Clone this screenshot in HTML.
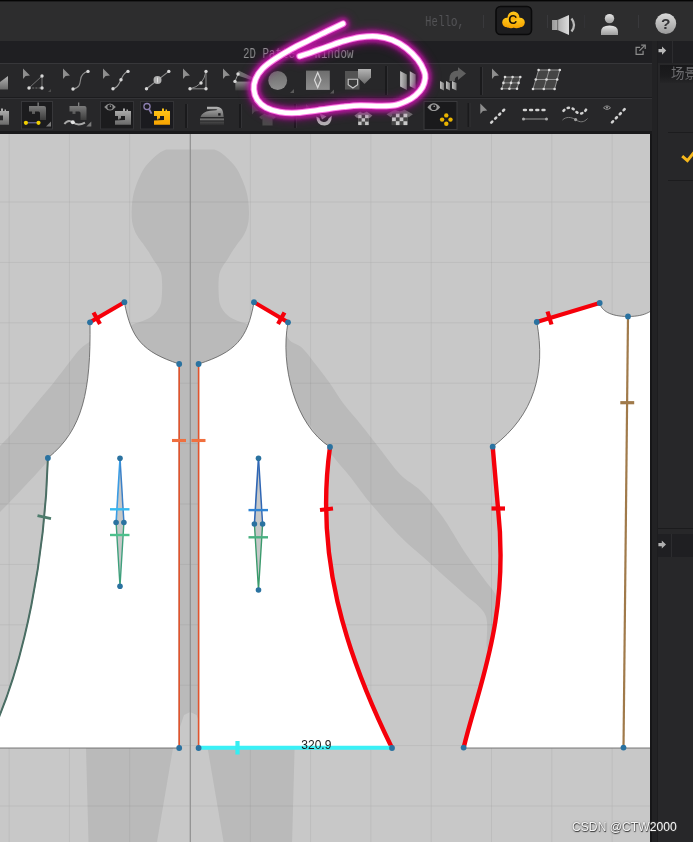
<!DOCTYPE html><html><head><meta charset="utf-8"><title>2D Pattern Window</title><style>
html,body{margin:0;padding:0;background:#29292b;}
body{width:693px;height:842px;overflow:hidden;position:relative;font-family:"Liberation Sans","Noto Sans CJK SC",sans-serif;}
#root{position:absolute;left:0;top:0;width:693px;height:842px;overflow:hidden;background:#29292b;}
.abs{position:absolute;}
#hello,#title2d,#scene{will-change:transform;}
#topbar{left:0;top:0;width:693px;height:41px;background:#2d2d2e;}
#topblack{left:0;top:0;width:693px;height:1px;background:#050505;border-bottom:1px solid #1d1d1e;}
#titlebar{left:0;top:41px;width:652px;height:22px;background:#1f1f22;}
#toolbar{left:0;top:63px;width:652px;height:68px;background:#272729;}
#tbline0{left:0;top:63px;width:652px;height:1px;background:#37373a;}
#tbline1{left:0;top:97px;width:652px;height:1px;background:#1c1c1e;}
#tbline1b{left:0;top:98px;width:652px;height:1px;background:#333336;}
#tbbottom{left:0;top:131px;width:652px;height:3px;background:#19191b;}
#canvas{left:0;top:134px;width:650px;height:708px;background:#c8c8c8;overflow:hidden;}
#canvasR{left:650px;top:134px;width:2px;height:708px;background:#161618;}
#divider{left:652px;top:41px;width:5px;height:801px;background:#222224;}
#dividerL{left:657px;top:41px;width:1px;height:801px;background:#1d1d1f;}
#rpanel{left:658px;top:41px;width:35px;height:801px;background:#272729;}
#hello{left:425.1px;top:14.1px;font:14.3px/16px "Liberation Mono",monospace;color:#545457;white-space:pre;transform:scaleX(0.757);transform-origin:0 0;}
#title2d{left:243.2px;top:45.7px;font:14.3px/16px "Liberation Mono",monospace;color:#8e8e90;white-space:pre;transform:scaleX(0.757);transform-origin:0 0;}
#scene{left:670.5px;top:62px;font:13.5px "Liberation Sans","Noto Sans CJK SC",sans-serif;color:#6e6e71;white-space:pre;}
#wm{left:571.5px;top:820px;font:12.15px "Liberation Sans",sans-serif;color:#f6f6f6;white-space:pre;text-shadow:0.5px 0.7px 1px #333,0 0 1.6px #666;will-change:transform;}
svg{position:absolute;left:0;top:0;}
</style></head><body><div id="root">
<div class="abs" id="topbar"></div>
<div class="abs" id="topblack"></div>
<div class="abs" id="titlebar"></div>
<div class="abs" id="toolbar"></div>
<div class="abs" id="tbline0"></div>
<div class="abs" id="tbline1"></div>
<div class="abs" id="tbline1b"></div>
<div class="abs" id="tbbottom"></div>
<div class="abs" id="canvas"></div>
<div class="abs" id="canvasR"></div>
<div class="abs" id="divider"></div>
<div class="abs" id="dividerL"></div>
<div class="abs" id="rpanel"></div>
<div class="abs" style="left:658px;top:41px;width:35px;height:22px;background:#1f1f22;"></div><div class="abs" style="left:672px;top:41px;width:1px;height:22px;background:#2c2c2f;"></div><div class="abs" style="left:660px;top:65px;width:33px;height:18px;background:linear-gradient(#18181a,#1c1c1e 60%,#252527);"></div><div class="abs" style="left:668px;top:132px;width:25px;height:1px;background:#1c1c1e;"></div><div class="abs" style="left:668px;top:180px;width:25px;height:1px;background:#1c1c1e;"></div><div class="abs" style="left:658px;top:528px;width:35px;height:1px;background:#1b1b1d;"></div><div class="abs" style="left:658px;top:534px;width:35px;height:23px;background:#1f1f22;"></div><div class="abs" style="left:671px;top:534px;width:1px;height:23px;background:#2c2c2f;"></div>
<svg width="693" height="842" viewBox="0 0 693 842" style="will-change:transform">
<defs><clipPath id="cv"><rect x="0" y="134" width="650" height="708"/></clipPath></defs>
<g clip-path="url(#cv)">
<path d="M190.3,149.6 L166.3,149.6 C165.1,150.2 161.6,151.4 159.3,153.0 C157.0,154.6 154.6,156.7 152.3,158.9 C150.1,161.1 147.6,163.6 145.8,166.0 C144.0,168.4 143.1,169.7 141.3,173.3 C139.6,176.9 136.8,183.2 135.3,187.7 C133.8,192.1 133.1,195.7 132.5,200.0 C131.9,204.3 131.6,209.5 131.6,213.7 C131.7,217.9 131.9,221.4 132.8,225.0 C133.7,228.6 134.9,231.6 136.8,235.0 C138.7,238.4 142.3,242.6 144.3,245.4 C146.3,248.2 147.3,249.6 148.8,252.0 C150.3,254.4 151.9,257.4 153.5,259.9 C155.1,262.4 157.0,264.6 158.3,267.0 C159.6,269.4 160.7,271.5 161.3,274.3 C161.9,277.1 162.0,280.6 162.1,284.0 C162.2,287.4 162.1,291.2 161.9,294.5 C161.7,297.8 161.5,301.4 160.7,304.0 C160.0,306.6 158.6,308.6 157.4,310.4 C156.2,312.2 154.8,313.6 153.3,315.0 C151.8,316.4 150.1,317.5 148.3,318.5 C146.6,319.5 144.8,320.2 142.8,321.0 C140.8,321.8 137.3,322.7 136.2,323.0 L128,326.5 L89.9,341.7 L72,375 L70,460 L70,700 L86,748 L88.5,842 L157,842 L173,748 L184,715 L190.3,712 Z" fill="#bababa"/>
<path d="M190.3,149.6 L166.3,149.6 C165.1,150.2 161.6,151.4 159.3,153.0 C157.0,154.6 154.6,156.7 152.3,158.9 C150.1,161.1 147.6,163.6 145.8,166.0 C144.0,168.4 143.1,169.7 141.3,173.3 C139.6,176.9 136.8,183.2 135.3,187.7 C133.8,192.1 133.1,195.7 132.5,200.0 C131.9,204.3 131.6,209.5 131.6,213.7 C131.7,217.9 131.9,221.4 132.8,225.0 C133.7,228.6 134.9,231.6 136.8,235.0 C138.7,238.4 142.3,242.6 144.3,245.4 C146.3,248.2 147.3,249.6 148.8,252.0 C150.3,254.4 151.9,257.4 153.5,259.9 C155.1,262.4 157.0,264.6 158.3,267.0 C159.6,269.4 160.7,271.5 161.3,274.3 C161.9,277.1 162.0,280.6 162.1,284.0 C162.2,287.4 162.1,291.2 161.9,294.5 C161.7,297.8 161.5,301.4 160.7,304.0 C160.0,306.6 158.6,308.6 157.4,310.4 C156.2,312.2 154.8,313.6 153.3,315.0 C151.8,316.4 150.1,317.5 148.3,318.5 C146.6,319.5 144.8,320.2 142.8,321.0 C140.8,321.8 137.3,322.7 136.2,323.0 L128,326.5 L89.9,341.7 L72,375 L70,460 L70,700 L86,748 L88.5,842 L157,842 L173,748 L184,715 L190.3,712 Z" fill="#bababa" transform="translate(380.6,0) scale(-1,1)"/>
<path d="M100,338 L89.9,341.7 C82,346 77,352 72.8,357.8 C65,368 58,377 51.4,385.6 C44,394 37,403 30,411 C20,423 10,437 -2,448 L-2,514 C20,492 45,465 66,440 L85,400 Z" fill="#bababa"/>
<path d="M284.0,333.0 C284.0,325.6 287.0,338.2 290.0,340.7 C293.0,343.2 298.1,344.2 302.0,347.8 C305.9,351.4 309.2,356.3 313.7,362.0 C318.2,367.7 324.2,375.3 329.2,382.2 C334.1,389.1 338.1,396.5 343.4,403.6 C348.7,410.7 355.1,417.4 361.2,425.0 C367.3,432.6 373.5,440.8 380.0,449.0 C386.5,457.2 393.1,467.2 400.0,474.3 C406.9,481.4 414.3,484.3 421.4,491.4 C428.5,498.5 435.6,507.0 442.7,517.0 C449.8,527.0 457.0,540.5 464.1,551.2 C471.2,561.9 480.2,573.5 485.5,581.0 C490.8,588.5 493.8,589.5 496.0,596.0 C498.2,602.5 499.0,611.7 499.0,620.0 C499.0,628.3 498.0,641.3 496.0,646.0 C494.0,650.7 488.8,653.1 487.0,648.0 C485.2,642.9 489.3,624.3 485.5,615.3 C481.7,606.3 471.2,600.8 464.1,594.0 C457.0,587.2 449.8,581.1 442.7,574.7 C435.6,568.3 428.5,561.9 421.4,555.5 C414.3,549.1 408.5,544.9 400.0,536.2 C391.5,527.5 378.8,513.2 370.5,503.3 C362.2,493.4 356.7,485.1 350.3,477.0 C343.9,468.9 338.7,463.7 332.0,455.0 C325.3,446.3 317.0,436.7 310.0,425.0 C303.0,413.3 294.3,400.3 290.0,385.0 C285.7,369.7 284.0,340.4 284.0,333.0 Z" fill="#bababa"/>
<g stroke="#000" stroke-opacity="0.055" stroke-width="1"><line x1="-51.2" y1="134" x2="-51.2" y2="842"/><line x1="9.1" y1="134" x2="9.1" y2="842"/><line x1="69.4" y1="134" x2="69.4" y2="842"/><line x1="129.7" y1="134" x2="129.7" y2="842"/><line x1="250.3" y1="134" x2="250.3" y2="842"/><line x1="310.6" y1="134" x2="310.6" y2="842"/><line x1="370.9" y1="134" x2="370.9" y2="842"/><line x1="431.2" y1="134" x2="431.2" y2="842"/><line x1="491.5" y1="134" x2="491.5" y2="842"/><line x1="551.8" y1="134" x2="551.8" y2="842"/><line x1="612.1" y1="134" x2="612.1" y2="842"/><line x1="672.4" y1="134" x2="672.4" y2="842"/><line x1="0" y1="202.0" x2="650" y2="202.0"/><line x1="0" y1="262.4" x2="650" y2="262.4"/><line x1="0" y1="322.8" x2="650" y2="322.8"/><line x1="0" y1="383.2" x2="650" y2="383.2"/><line x1="0" y1="443.6" x2="650" y2="443.6"/><line x1="0" y1="504.0" x2="650" y2="504.0"/><line x1="0" y1="564.4" x2="650" y2="564.4"/><line x1="0" y1="624.8" x2="650" y2="624.8"/><line x1="0" y1="685.2" x2="650" y2="685.2"/><line x1="0" y1="745.6" x2="650" y2="745.6"/><line x1="0" y1="806.0" x2="650" y2="806.0"/><line x1="0" y1="866.4" x2="650" y2="866.4"/></g>
<line x1="190.3" y1="134" x2="190.3" y2="842" stroke="#8f8f8f" stroke-width="1.2"/>
<path d="M90,322.3 L124.4,302.2 C131.2,339 142.6,351.8 179.2,364 L179.2,748 L-5,748 L-4,724 C24,660 45,560 47.9,458 C83,430 91,390 90,322.3 Z" fill="#fff" stroke="#5a5a5a" stroke-width="0.8"/>
<path d="M288,322.3 L254,302.2 C247.4,339 236,351.8 198.6,364 L198.6,748 L392,748 C344.2,650.6 315,555.2 330,447 C295,425 280,365 288,322.3 Z" fill="#fff" stroke="#5a5a5a" stroke-width="0.8"/>
<path d="M536.8,322 L599.7,303 C601.5,310.5 610,316.5 628,316.5 C646,316.5 654.5,310.5 656.3,303 L656,748 L463.6,748 C477,690 510,620 498,508 L492.7,446.7 C534.5,415.1 545.9,372.1 536.8,322 Z" fill="#fff" stroke="#5a5a5a" stroke-width="0.8"/>
<path d="M47.9,458 C45,560 24,660 -4,724" fill="none" stroke="#4a6e64" stroke-width="2"/>
<line x1="37.5" y1="515.6" x2="51" y2="518.6" stroke="#4d7c6c" stroke-width="3"/>
<line x1="179.2" y1="364" x2="179.2" y2="748" stroke="#e2532c" stroke-width="1.6"/>
<line x1="198.6" y1="364" x2="198.6" y2="748" stroke="#e2532c" stroke-width="1.6"/>
<line x1="172" y1="440.5" x2="186" y2="440.5" stroke="#f0703f" stroke-width="3.1"/>
<line x1="191.5" y1="440.5" x2="205.5" y2="440.5" stroke="#f0703f" stroke-width="3.1"/>
<path d="M120,458.2 L116.1,522.5 L120,586.3 L123.9,522.5 Z" fill="#c6c8c8" stroke="none"/><path d="M123.9,522.5 L120,458.2" fill="none" stroke="#3a80c8" stroke-width="1.5"/><path d="M116.1,522.5 L120,458.2" fill="none" stroke="#3a9ce4" stroke-width="1.6"/><path d="M116.1,522.5 L120,586.3 L123.9,522.5" fill="none" stroke="#3ea07c" stroke-width="1.4" stroke-linejoin="round"/><line x1="110" y1="509.3" x2="129.5" y2="509.3" stroke="#36baf0" stroke-width="2.4"/><line x1="110" y1="535" x2="129.5" y2="535" stroke="#4cc08c" stroke-width="2.4"/><circle cx="120" cy="458.2" r="2.8" fill="#2a72a0"/><circle cx="116.1" cy="522.5" r="2.8" fill="#2a72a0"/><circle cx="123.9" cy="522.5" r="2.8" fill="#2a72a0"/><circle cx="120" cy="586.3" r="2.8" fill="#2a72a0"/>
<path d="M258.5,458.2 L254.4,524 L258.5,590 L262.6,524 Z" fill="#c6c8c8" stroke="none"/><path d="M262.6,524 L258.5,458.2" fill="none" stroke="#2f66b4" stroke-width="1.5"/><path d="M254.4,524 L258.5,458.2" fill="none" stroke="#2f66b4" stroke-width="1.6"/><path d="M254.4,524 L258.5,590 L262.6,524" fill="none" stroke="#3a9a6c" stroke-width="1.4" stroke-linejoin="round"/><line x1="248.5" y1="510.1" x2="268.0" y2="510.1" stroke="#2f84d4" stroke-width="2.4"/><line x1="248.5" y1="537.3" x2="268.0" y2="537.3" stroke="#48b080" stroke-width="2.4"/><circle cx="258.5" cy="458.2" r="2.8" fill="#2a72a0"/><circle cx="254.4" cy="524" r="2.8" fill="#2a72a0"/><circle cx="262.6" cy="524" r="2.8" fill="#2a72a0"/><circle cx="258.5" cy="590" r="2.8" fill="#2a72a0"/>
<line x1="90" y1="322.3" x2="124.4" y2="302.2" stroke="#f5000a" stroke-width="4.1"/>
<line x1="93.5" y1="312.5" x2="100" y2="324" stroke="#f5000a" stroke-width="4.2"/>
<line x1="288" y1="322.3" x2="254" y2="302.2" stroke="#f5000a" stroke-width="4.1"/>
<line x1="284.5" y1="312.5" x2="278" y2="324" stroke="#f5000a" stroke-width="4.2"/>
<line x1="536.8" y1="322" x2="599.7" y2="303" stroke="#f5000a" stroke-width="4.1"/>
<line x1="547.5" y1="311.5" x2="551.5" y2="324.5" stroke="#f5000a" stroke-width="4.2"/>
<path d="M330,447 C315,555.2 344.2,650.6 392,748" fill="none" stroke="#f5000a" stroke-width="4.4"/>
<line x1="320" y1="510" x2="333" y2="508.5" stroke="#f5000a" stroke-width="4.2"/>
<path d="M492.7,446.7 L498,508 C510,620 477,690 463.6,748" fill="none" stroke="#f5000a" stroke-width="4.4"/>
<line x1="491.5" y1="508.5" x2="505" y2="508.5" stroke="#f5000a" stroke-width="4.2"/>
<line x1="628" y1="316.5" x2="623.5" y2="748" stroke="#a07a4a" stroke-width="2.2"/>
<line x1="620.3" y1="402.7" x2="634.2" y2="402.7" stroke="#a07a4a" stroke-width="3.2"/>
<line x1="198.6" y1="747.8" x2="392" y2="747.8" stroke="#3af0f6" stroke-width="4"/>
<line x1="237.5" y1="741" x2="237.5" y2="754.5" stroke="#35eef2" stroke-width="4.2"/>
<circle cx="90" cy="322.3" r="2.9" fill="#2a72a0"/>
<circle cx="124.4" cy="302.2" r="2.9" fill="#2a72a0"/>
<circle cx="179.2" cy="364" r="2.9" fill="#2a72a0"/>
<circle cx="47.9" cy="458" r="2.9" fill="#2a72a0"/>
<circle cx="179.2" cy="748" r="2.9" fill="#2a72a0"/>
<circle cx="288" cy="322.3" r="2.9" fill="#2a72a0"/>
<circle cx="254" cy="302.2" r="2.9" fill="#2a72a0"/>
<circle cx="198.6" cy="364" r="2.9" fill="#2a72a0"/>
<circle cx="330" cy="447" r="2.9" fill="#2a72a0"/>
<circle cx="198.6" cy="748" r="2.9" fill="#2a72a0"/>
<circle cx="392" cy="748" r="2.9" fill="#2a72a0"/>
<circle cx="536.8" cy="322" r="2.9" fill="#2a72a0"/>
<circle cx="599.7" cy="303" r="2.9" fill="#2a72a0"/>
<circle cx="628" cy="316.5" r="2.9" fill="#2a72a0"/>
<circle cx="492.7" cy="446.7" r="2.9" fill="#2a72a0"/>
<circle cx="463.6" cy="747.6" r="2.9" fill="#2a72a0"/>
<circle cx="623.5" cy="747.6" r="2.9" fill="#2a72a0"/>
<text x="301.3" y="748.6" font-family="Liberation Sans, sans-serif" font-size="12" fill="#1c1c1c">320.9</text>
</g></svg>
<svg width="693" height="842" viewBox="0 0 693 842" style="will-change:transform">
<defs>
<linearGradient id="gA" x1="0" y1="0" x2="0" y2="1"><stop offset="0" stop-color="#b4b4b4"/><stop offset="1" stop-color="#6a6a6a"/></linearGradient>
<linearGradient id="gB" x1="0" y1="0" x2="0" y2="1"><stop offset="0" stop-color="#6e6e6e"/><stop offset="1" stop-color="#8e8e8e"/></linearGradient>
<linearGradient id="gC" x1="0" y1="0" x2="0" y2="1"><stop offset="0" stop-color="#8a8a8a"/><stop offset="1" stop-color="#3c3c3c"/></linearGradient>
<linearGradient id="gD" x1="0" y1="0" x2="1" y2="0"><stop offset="0" stop-color="#c2c2c2"/><stop offset="1" stop-color="#7c7c7c"/></linearGradient>
<linearGradient id="gH" x1="0" y1="0" x2="0" y2="1"><stop offset="0" stop-color="#e6e6e6"/><stop offset="1" stop-color="#9c9c9c"/></linearGradient>
<linearGradient id="gS" x1="0" y1="0" x2="1" y2="0"><stop offset="0" stop-color="#9a9a9a"/><stop offset="1" stop-color="#dcdcdc"/></linearGradient>
<linearGradient id="gY" x1="0" y1="0" x2="0" y2="1"><stop offset="0" stop-color="#ffc71a"/><stop offset="1" stop-color="#f7a300"/></linearGradient>
<linearGradient id="gI" x1="0" y1="0" x2="0" y2="1"><stop offset="0" stop-color="#4a4a4a"/><stop offset="1" stop-color="#2c2c2e"/></linearGradient>
<linearGradient id="gH2" x1="0" y1="0" x2="0" y2="1"><stop offset="0" stop-color="#dadada"/><stop offset="1" stop-color="#9a9a9a"/></linearGradient>
</defs>
<line x1="483.5" y1="15" x2="483.5" y2="28" stroke="#39393c" stroke-width="1"/>
<line x1="547.5" y1="15" x2="547.5" y2="28" stroke="#39393c" stroke-width="1"/>
<line x1="584.5" y1="15" x2="584.5" y2="28" stroke="#323235" stroke-width="1"/>
<line x1="638.5" y1="15" x2="638.5" y2="28" stroke="#39393c" stroke-width="1"/>
<rect x="496" y="6.5" width="35.5" height="28" rx="4.5" fill="#1d1d1f" stroke="#0a0a0b" stroke-width="1.6"/>
<g fill="url(#gY)"><circle cx="513.5" cy="17.5" r="6"/><circle cx="507" cy="22.5" r="4.8"/><circle cx="520" cy="22.5" r="4.8"/><circle cx="511" cy="24" r="4.2"/><circle cx="516.5" cy="24" r="4.2"/><rect x="507" y="20" width="13" height="7.5"/></g>
<text x="512.8" y="24.2" text-anchor="middle" font-family="Liberation Sans, sans-serif" font-weight="bold" font-size="12.5" fill="#1a1208">C</text>
<path d="M552,20 L557.5,20 L569,15 L569,35 L557.5,30 L552,30 Z" fill="url(#gS)"/>
<line x1="557.7" y1="19.5" x2="557.7" y2="30.5" stroke="#555" stroke-width="0.8"/>
<path d="M571.5,18.5 Q576.5,25 571.5,31.5" fill="none" stroke="#b8b8b8" stroke-width="2.2"/>
<circle cx="609.5" cy="18.6" r="4.7" fill="url(#gH)"/>
<path d="M601,35 L601,31.5 Q601,25.5 609.5,25.5 Q618,25.5 618,31.5 L618,35 Z" fill="url(#gH)"/>
<circle cx="665.8" cy="23.6" r="10.4" fill="url(#gH2)"/>
<text x="665.8" y="29.2" text-anchor="middle" font-family="Liberation Sans, sans-serif" font-weight="bold" font-size="15.5" fill="#333336">?</text>
<g transform="translate(-1.4,0.3)"><path d="M641.5,47 L637.5,47 L637.5,54 L644.5,54 L644.5,50.5" fill="none" stroke="#8c8c8c" stroke-width="1.2"/><path d="M640.8,50.6 L646,45.4" stroke="#8c8c8c" stroke-width="1.2"/><path d="M642.6,44.8 L646.6,44.8 L646.6,48.8" fill="none" stroke="#8c8c8c" stroke-width="1.2"/></g>
<path d="M658.5,49 L662,49 L662,46.5 L666.2,50.6 L662,54.8 L662,52.3 L658.5,52.3 Z" fill="#b8b8b8"/>
<path d="M658.4,543 L661.8,543 L661.8,540.6 L666,544.6 L661.8,548.6 L661.8,546.2 L658.4,546.2 Z" fill="#b0b0b0"/>
<path d="M682.2,156.2 L687.4,160.6 L694,152.5" fill="none" stroke="#f6b81c" stroke-width="3"/>
<path d="M-2,83.5 L8,76 L8,89.5 L-2,89.5 Z" fill="url(#gA)"/>
<path d="M23,68.5 L23,79.0 L25.6,76.1 L30,75.5 Z" fill="#8e8e8e"/>
<g stroke="#747474" stroke-width="1"><line x1="29" y1="88" x2="42" y2="76"/><line x1="42" y1="76" x2="42" y2="88"/><line x1="29" y1="88" x2="42" y2="88" stroke-dasharray="2 1.2"/></g>
<circle cx="42" cy="76" r="1.7" fill="#d6d6d6"/><circle cx="29" cy="88" r="1.7" fill="#d6d6d6"/><circle cx="42" cy="88" r="1.7" fill="#d6d6d6"/>
<path d="M51,92 L48,92 L51,89 Z" fill="#4c4c4c"/>
<path d="M63,68.5 L63,79.0 L65.6,76.1 L70,75.5 Z" fill="#8e8e8e"/>
<path d="M73,89 C79.5,88 80,84 80.5,80 C81,75.5 82.5,72.8 88,71.4" fill="none" stroke="#8a8a8a" stroke-width="1.1"/>
<circle cx="73" cy="89" r="1.7" fill="#d6d6d6"/><circle cx="88" cy="71.4" r="1.7" fill="#d6d6d6"/>
<path d="M103,68.5 L103,79.0 L105.6,76.1 L110,75.5 Z" fill="#8e8e8e"/>
<path d="M113,88.8 C119,87 119,83 121,79.7 C123,76 123,73 128,71.4" fill="none" stroke="#9a9a9a" stroke-width="1.1"/>
<circle cx="113" cy="88.8" r="1.7" fill="#d6d6d6"/><circle cx="121" cy="79.7" r="1.7" fill="#d6d6d6"/><circle cx="128" cy="71.4" r="1.7" fill="#d6d6d6"/>
<line x1="146.5" y1="88.8" x2="168.8" y2="71.4" stroke="#8c8c8c" stroke-width="1.1"/>
<circle cx="146.5" cy="88.8" r="1.7" fill="#d6d6d6"/><circle cx="168.8" cy="71.4" r="1.7" fill="#d6d6d6"/>
<circle cx="157.5" cy="80" r="4" fill="#b0b0b0"/><line x1="157.5" y1="77.5" x2="157.5" y2="82.5" stroke="#dedede" stroke-width="1"/>
<path d="M183,68.5 L183,79.0 L185.6,76.1 L190,75.5 Z" fill="#8e8e8e"/>
<path d="M190,88.8 Q203.5,86 206,71.4 L206,88.8 Z" fill="none" stroke="#8c8c8c" stroke-width="1"/>
<circle cx="190" cy="88.8" r="1.7" fill="#d6d6d6"/><circle cx="206" cy="71.4" r="1.7" fill="#d6d6d6"/><circle cx="206" cy="88.8" r="1.7" fill="#d6d6d6"/><circle cx="201" cy="83" r="1.7" fill="#d6d6d6"/>
<path d="M223,68.5 L223,79.0 L225.6,76.1 L230,75.5 Z" fill="#8e8e8e"/>
<path d="M238.6,70.6 L252,77 L252,80.2 L237.6,75.6 Z" fill="#6e6e6e"/>
<rect x="235.3" y="81.6" width="16.7" height="8.9" fill="url(#gC)"/>
<line x1="238" y1="74" x2="235" y2="81.4" stroke="#9a9a9a" stroke-width="1"/>
<circle cx="238" cy="74" r="1.7" fill="#d6d6d6"/><circle cx="235" cy="81.4" r="1.7" fill="#d6d6d6"/>
<circle cx="277.7" cy="80.5" r="9.4" fill="url(#gB)"/>
<path d="M294,93 L290,93 L294,89 Z" fill="#5a5a5a"/>
<rect x="306" y="70.6" width="23.8" height="19.3" fill="url(#gB)"/>
<path d="M317.7,72.6 L320.9,80.1 L317.7,87.6 L314.5,80.1 Z" fill="none" stroke="#d8d8d8" stroke-width="1.2"/>
<path d="M334,93.5 L330,93.5 L334,89.5 Z" fill="#5a5a5a"/>
<rect x="345" y="71" width="14.5" height="18.6" fill="#545454"/>
<path d="M358,69 L371,69 L371,77.5 L364.5,84 L358,77.5 Z" fill="url(#gA)"/>
<path d="M348.2,79.3 L357.6,79.3 L357.6,84.6 L352.9,88 L348.2,84.6 Z" fill="#3a3a3a" stroke="#c8c8c8" stroke-width="1.1"/>
<line x1="386" y1="66" x2="386" y2="95" stroke="#1a1a1c" stroke-width="2"/><line x1="387.5" y1="66" x2="387.5" y2="95" stroke="#323235" stroke-width="1"/>
<path d="M400.1,70.9 L406.8,74.6 L406.8,89.9 L400.1,86.6 Z" fill="url(#gD)"/>
<path d="M409.8,71.2 L415.7,74.4 L415.7,89.2 L409.8,86.2 Z" fill="url(#gD)"/>
<g fill="url(#gD)"><path d="M440,81 L444,83 L444,90.5 L440,88.5 Z"/><path d="M446,81 L450,83 L450,90.5 L446,88.5 Z"/><path d="M452,81 L456.5,83 L456.5,90.5 L452,88.5 Z"/></g>
<path d="M449.3,81 Q448.6,70.5 458,70.5 L458,67.3 L466,73.6 L458,80 L458,76.4 Q454.6,76.4 454.8,81 Z" fill="#606060"/>
<line x1="481" y1="67" x2="481" y2="95" stroke="#1a1a1c" stroke-width="2"/><line x1="482.5" y1="67" x2="482.5" y2="95" stroke="#323235" stroke-width="1"/>
<path d="M492,68.5 L492,79.0 L494.6,76.1 L499,75.5 Z" fill="#8e8e8e"/>
<path d="M505,77 L520.3,77 L517,88.8 L501.8,88.8 Z" fill="#454545"/><g stroke="#909090" stroke-width="1"><line x1="505.0" y1="77.0" x2="520.3" y2="77.0"/><line x1="505.0" y1="77.0" x2="501.8" y2="88.8"/><line x1="503.4" y1="82.9" x2="518.6" y2="82.9"/><line x1="512.6" y1="77.0" x2="509.4" y2="88.8"/><line x1="501.8" y1="88.8" x2="517.0" y2="88.8"/><line x1="520.3" y1="77.0" x2="517.0" y2="88.8"/></g><circle cx="505.0" cy="77.0" r="1.3" fill="#dcdcdc"/><circle cx="503.4" cy="82.9" r="1.3" fill="#dcdcdc"/><circle cx="501.8" cy="88.8" r="1.3" fill="#dcdcdc"/><circle cx="512.6" cy="77.0" r="1.3" fill="#dcdcdc"/><circle cx="511.0" cy="82.9" r="1.3" fill="#dcdcdc"/><circle cx="509.4" cy="88.8" r="1.3" fill="#dcdcdc"/><circle cx="520.3" cy="77.0" r="1.3" fill="#dcdcdc"/><circle cx="518.6" cy="82.9" r="1.3" fill="#dcdcdc"/><circle cx="517.0" cy="88.8" r="1.3" fill="#dcdcdc"/>
<path d="M538.6,70 L559.8,70 L554.6,89 L533,89 Z" fill="#454545"/><g stroke="#909090" stroke-width="1"><line x1="538.6" y1="70.0" x2="559.8" y2="70.0"/><line x1="538.6" y1="70.0" x2="533.0" y2="89.0"/><line x1="535.8" y1="79.5" x2="557.2" y2="79.5"/><line x1="549.2" y1="70.0" x2="543.8" y2="89.0"/><line x1="533.0" y1="89.0" x2="554.6" y2="89.0"/><line x1="559.8" y1="70.0" x2="554.6" y2="89.0"/></g><circle cx="538.6" cy="70.0" r="1.3" fill="#dcdcdc"/><circle cx="535.8" cy="79.5" r="1.3" fill="#dcdcdc"/><circle cx="533.0" cy="89.0" r="1.3" fill="#dcdcdc"/><circle cx="549.2" cy="70.0" r="1.3" fill="#dcdcdc"/><circle cx="546.5" cy="79.5" r="1.3" fill="#dcdcdc"/><circle cx="543.8" cy="89.0" r="1.3" fill="#dcdcdc"/><circle cx="559.8" cy="70.0" r="1.3" fill="#dcdcdc"/><circle cx="557.2" cy="79.5" r="1.3" fill="#dcdcdc"/><circle cx="554.6" cy="89.0" r="1.3" fill="#dcdcdc"/>
<g transform="translate(-7,0)"><path d="M0,111 L8,111 L8,108.5 L10,108.5 L10,111 L11.5,111 L11.5,109.5 L13,109.5 L13,111 L16,111 L16,124.8 L0,124.8 L0,120.4 L10,120 L10,116 L6,116 L6,118.5 L4.5,118.5 L4.5,119.5 L3,119.5 L3,116 L0,116 Z" fill="url(#gA)"/></g>
<rect x="0" y="115.5" width="3" height="4.8" fill="#28282a"/>
<rect x="21.5" y="101.5" width="31" height="27.5" fill="#1c1c1e" stroke="#37373a" stroke-width="1"/>
<path d="M29,106 L37.5,106 L37.5,102.5 L38.8,102.5 L38.8,106 L44,106 Q46,106 46,108 L46,120 L40,120 L40,113 Q40,111.5 38.5,111.5 L35,111.5 L35,114 L32,114 L32,111.5 L29,111.5 Z" fill="url(#gC)"/>
<line x1="26" y1="122.8" x2="38.5" y2="122.8" stroke="#7c7cb4" stroke-width="1"/>
<circle cx="25.9" cy="122.8" r="2.1" fill="#f2d000"/><circle cx="38.5" cy="122.8" r="2.1" fill="#f2d000"/>
<path d="M51,126.5 L46,126.5 L51,121.5 Z" fill="#7a7a7a"/>
<path d="M69.5,106 L78.0,106 L78.0,102.5 L79.3,102.5 L79.3,106 L84.5,106 Q86.5,106 86.5,108 L86.5,120 L80.5,120 L80.5,113 Q80.5,111.5 79.0,111.5 L75.5,111.5 L75.5,114 L72.5,114 L72.5,111.5 L69.5,111.5 Z" fill="url(#gC)"/>
<path d="M64.4,124 C67,120.2 70,120.4 72.8,122.3 C76,124.8 80,125.4 85,122.6" fill="none" stroke="#a8a8a8" stroke-width="1.9"/>
<circle cx="72.8" cy="122.3" r="2" fill="#e4e4e4"/>
<path d="M91.3,126.5 L86.3,126.5 L91.3,121.5 Z" fill="#7a7a7a"/>
<rect x="100.5" y="101.5" width="33" height="27.5" fill="#1c1c1e" stroke="#333336" stroke-width="1"/>
<path d="M104.2,107 Q110,99.8 115.8,107 Q110,114.2 104.2,107 Z" fill="#8e8e8e"/><circle cx="110" cy="107" r="2.59" fill="#1c1c1e"/><circle cx="110.4" cy="106.1" r="0.7" fill="#bbb"/>
<path d="M115,111 L123,111 L123,108.5 L125,108.5 L125,111 L126.5,111 L126.5,109.5 L128,109.5 L128,111 L131,111 L131,124.8 L115,124.8 L115,120.4 L125,120 L125,116 L121,116 L121,118.5 L119.5,118.5 L119.5,119.5 L118,119.5 L118,116 L115,116 Z" fill="url(#gA)"/>
<rect x="140.5" y="101.5" width="33" height="27.5" fill="#1b1b1f" stroke="#333336" stroke-width="1"/>
<circle cx="147" cy="106.6" r="3.1" fill="none" stroke="#8c7fb0" stroke-width="1.3"/><line x1="149.2" y1="109.4" x2="151.6" y2="113.6" stroke="#8c7fb0" stroke-width="1.9"/>
<path d="M154,111 L162,111 L162,108.5 L164,108.5 L164,111 L165.5,111 L165.5,109.5 L167,109.5 L167,111 L170,111 L170,124.8 L154,124.8 L154,120.4 L164,120 L164,116 L160,116 L160,118.5 L158.5,118.5 L158.5,119.5 L157,119.5 L157,116 L154,116 Z" fill="url(#gY)"/>
<line x1="186" y1="104" x2="186" y2="128" stroke="#1a1a1c" stroke-width="2"/><line x1="187.5" y1="104" x2="187.5" y2="128" stroke="#323235" stroke-width="1"/>
<path d="M200.5,117 Q202,112 210,110.8 L216,110.2 Q218.5,109.8 216,109.3 L207,109.3 L207,106.8 L217,106.8 Q222,107 223,112 L223.7,117 Z" fill="url(#gA)"/>
<rect x="218.2" y="113.2" width="2.4" height="2.4" fill="#1c1c1e"/>
<rect x="200" y="118.4" width="24" height="2" fill="#6c6c6c"/><rect x="200" y="121.6" width="24" height="3.6" fill="url(#gI)"/>
<line x1="240" y1="104" x2="240" y2="128" stroke="#1a1a1c" stroke-width="2"/><line x1="241.5" y1="104" x2="241.5" y2="128" stroke="#323235" stroke-width="1"/>
<path d="M252,104 L252,114.5 L254.6,111.6 L259,111 Z" fill="#4a4a4a"/>
<path d="M264.44,113.5 L259,117.1 L261.72,119.5 L262.4,118.54 L262.4,125.5 L272.6,125.5 L272.6,118.54 L273.28,119.5 L276,117.1 L270.56,113.5 Q267.5,116.14 264.44,113.5 Z" fill="#4a4a4a"/>
<line x1="295" y1="104" x2="295" y2="128" stroke="#1a1a1c" stroke-width="2"/><line x1="296.5" y1="104" x2="296.5" y2="128" stroke="#323235" stroke-width="1"/>
<path d="M306,104 L306,114.5 L308.6,111.6 L313,111 Z" fill="#4a4a4a"/>
<path d="M316.3,116.5 Q316.5,126 325,125.6 Q331.8,124.8 331.8,115.5 L328.6,118.6 Q327.6,122.2 323.6,122 Q319.6,121.6 319.4,118 Z" fill="#b4b4b4"/><path d="M319.5,113 L326.5,116.4 L322,119.5 Z" fill="#8c8c8c"/>
<path d="M360.15999999999997,111.5 L354.4,115.58 L357.28,118.3 L358.0,117.212 L358.0,125.1 L368.79999999999995,125.1 L368.79999999999995,117.212 L369.52,118.3 L372.4,115.58 L366.64,111.5 Q363.4,114.492 360.15999999999997,111.5 Z" fill="#7a7a7a"/>
<rect x="358.3" y="114.9" width="3.4" height="3.4" fill="#c4c4c4"/><rect x="358.3" y="118.30000000000001" width="3.4" height="3.4" fill="#444"/><rect x="358.3" y="121.7" width="3.4" height="3.4" fill="#c4c4c4"/><rect x="361.7" y="114.9" width="3.4" height="3.4" fill="#444"/><rect x="361.7" y="118.30000000000001" width="3.4" height="3.4" fill="#c4c4c4"/><rect x="361.7" y="121.7" width="3.4" height="3.4" fill="#444"/><rect x="365.1" y="114.9" width="3.4" height="3.4" fill="#c4c4c4"/><rect x="365.1" y="118.30000000000001" width="3.4" height="3.4" fill="#444"/><rect x="365.1" y="121.7" width="3.4" height="3.4" fill="#c4c4c4"/>
<path d="M394.948,109.5 L386.5,114.18 L390.724,117.3 L391.78,116.05199999999999 L391.78,125.1 L407.62,125.1 L407.62,116.05199999999999 L408.676,117.3 L412.9,114.18 L404.452,109.5 Q399.7,112.932 394.948,109.5 Z" fill="#6a6a6a"/>
<rect x="392.1" y="113.7" width="3.8" height="3.8" fill="#444"/><rect x="392.1" y="117.5" width="3.8" height="3.8" fill="#c8c8c8"/><rect x="392.1" y="121.3" width="3.8" height="3.8" fill="#444"/><rect x="395.90000000000003" y="113.7" width="3.8" height="3.8" fill="#c8c8c8"/><rect x="395.90000000000003" y="117.5" width="3.8" height="3.8" fill="#444"/><rect x="395.90000000000003" y="121.3" width="3.8" height="3.8" fill="#c8c8c8"/><rect x="399.70000000000005" y="113.7" width="3.8" height="3.8" fill="#444"/><rect x="399.70000000000005" y="117.5" width="3.8" height="3.8" fill="#c8c8c8"/><rect x="399.70000000000005" y="121.3" width="3.8" height="3.8" fill="#444"/><rect x="403.5" y="113.7" width="3.8" height="3.8" fill="#c8c8c8"/><rect x="403.5" y="117.5" width="3.8" height="3.8" fill="#444"/><rect x="403.5" y="121.3" width="3.8" height="3.8" fill="#c8c8c8"/>
<rect x="424" y="101.5" width="33" height="28" fill="#1a1a1c" stroke="#3a3a3d" stroke-width="1"/>
<path d="M427.40000000000003,107.2 Q433.8,99.4 440.2,107.2 Q433.8,115.0 427.40000000000003,107.2 Z" fill="#9a9a9a"/><circle cx="433.8" cy="107.2" r="2.81" fill="#1c1c1e"/><circle cx="434.2" cy="106.3" r="0.7" fill="#bbb"/>
<circle cx="442.1" cy="119.6" r="2.2" fill="#e9b400"/>
<circle cx="450.5" cy="119.6" r="2.2" fill="#e9b400"/>
<circle cx="446.3" cy="115.39999999999999" r="2.2" fill="#e9b400"/>
<circle cx="446.3" cy="123.8" r="2.2" fill="#e9b400"/>
<line x1="468.5" y1="103" x2="468.5" y2="127" stroke="#1a1a1c" stroke-width="2"/><line x1="470.0" y1="103" x2="470.0" y2="127" stroke="#323235" stroke-width="1"/>
<path d="M480.3,103.5 L480.3,114.0 L482.90000000000003,111.1 L487.3,110.5 Z" fill="#8e8e8e"/>
<line x1="491.2" y1="122.6" x2="505.3" y2="108.6" stroke="#d2d2d2" stroke-width="2.6" stroke-dasharray="1.4 4.2" stroke-linecap="round"/>
<line x1="524" y1="110" x2="546" y2="110" stroke="#d2d2d2" stroke-width="2.6" stroke-dasharray="1.8 4.4" stroke-linecap="round"/>
<line x1="523.5" y1="119" x2="546.5" y2="119" stroke="#8c8c8c" stroke-width="1.1"/><circle cx="523.5" cy="119" r="1.5" fill="#a8a8a8"/><circle cx="546.5" cy="119" r="1.5" fill="#a8a8a8"/>
<path d="M563.5,110.8 C567,106.5 572,107 575,110.5 C578,114.5 583,115 586.5,109" fill="none" stroke="#d2d2d2" stroke-width="2.6" stroke-dasharray="1.2 3.9" stroke-linecap="round"/>
<path d="M562.5,120 C566,116.5 571,116.8 575.6,119.6 C580,122.8 584,122.5 587.5,118.5" fill="none" stroke="#7c7c7c" stroke-width="1"/><circle cx="575.6" cy="119.6" r="1.6" fill="#a0a0a0"/>
<path d="M603.5,107.8 Q607,104 610.5,107.8 Q607,111 603.5,107.8 Z" fill="none" stroke="#9a9a9a" stroke-width="0.9"/><circle cx="607" cy="107.6" r="1" fill="#9a9a9a"/>
<line x1="612" y1="122.3" x2="625.5" y2="108.3" stroke="#d2d2d2" stroke-width="2.6" stroke-dasharray="1.4 4.2" stroke-linecap="round"/>
</svg>
<div class="abs" id="hello">Hello,</div>
<div class="abs" id="title2d">2D Pattern Window</div>
<div class="abs" id="scene">场景</div>
<svg width="693" height="842" viewBox="0 0 693 842" style="will-change:transform"><defs><filter id="gl0" x="-20%" y="-20%" width="140%" height="140%"><feGaussianBlur stdDeviation="4"/></filter><filter id="gl" x="-20%" y="-20%" width="140%" height="140%"><feGaussianBlur stdDeviation="2.3"/></filter><filter id="gl2" x="-20%" y="-20%" width="140%" height="140%"><feGaussianBlur stdDeviation="0.6"/></filter></defs><path d="M343.0,23.7 C340.3,25.0 332.2,28.8 326.6,31.5 C321.0,34.2 315.1,37.2 309.3,40.1 C303.5,43.0 297.7,45.6 291.9,48.8 C286.1,52.0 279.5,55.9 274.6,59.2 C269.7,62.5 265.7,65.4 262.5,68.7 C259.3,72.0 257.0,75.6 255.6,79.1 C254.2,82.6 253.6,86.0 253.9,89.5 C254.2,93.0 255.3,96.8 257.3,99.8 C259.3,102.8 262.2,105.6 266.0,107.6 C269.8,109.6 274.6,111.1 279.8,112.0 C285.0,112.9 290.8,113.1 297.1,112.8 C303.5,112.5 310.1,111.2 317.9,110.2 C325.7,109.2 336.9,107.6 343.9,106.8 C350.9,106.0 354.0,105.6 360.0,105.5 C366.0,105.4 374.2,106.0 380.0,106.0 C385.8,106.0 390.2,106.1 394.6,105.3 C399.0,104.5 402.7,102.8 406.2,101.2 C409.7,99.6 412.7,97.7 415.4,95.4 C418.1,93.1 420.8,90.3 422.4,87.4 C424.0,84.5 424.9,80.8 425.2,78.1 C425.5,75.4 425.4,74.3 424.1,71.2 C422.9,68.1 420.7,63.5 417.7,59.6 C414.7,55.8 410.4,51.4 406.2,48.1 C402.0,44.8 397.1,41.9 392.3,40.0 C387.5,38.1 382.7,37.0 377.3,36.5 C371.9,36.0 365.6,36.5 360.0,37.2 C354.4,38.0 349.5,39.4 343.9,41.0 C338.3,42.6 332.4,45.0 326.6,47.0 C320.8,49.0 313.8,51.6 309.3,53.1 C304.8,54.6 301.3,55.7 299.7,56.2" fill="none" stroke="#9a1088" stroke-width="16" stroke-linecap="round" stroke-linejoin="round" filter="url(#gl0)" opacity="0.45"/><path d="M343.0,23.7 C340.3,25.0 332.2,28.8 326.6,31.5 C321.0,34.2 315.1,37.2 309.3,40.1 C303.5,43.0 297.7,45.6 291.9,48.8 C286.1,52.0 279.5,55.9 274.6,59.2 C269.7,62.5 265.7,65.4 262.5,68.7 C259.3,72.0 257.0,75.6 255.6,79.1 C254.2,82.6 253.6,86.0 253.9,89.5 C254.2,93.0 255.3,96.8 257.3,99.8 C259.3,102.8 262.2,105.6 266.0,107.6 C269.8,109.6 274.6,111.1 279.8,112.0 C285.0,112.9 290.8,113.1 297.1,112.8 C303.5,112.5 310.1,111.2 317.9,110.2 C325.7,109.2 336.9,107.6 343.9,106.8 C350.9,106.0 354.0,105.6 360.0,105.5 C366.0,105.4 374.2,106.0 380.0,106.0 C385.8,106.0 390.2,106.1 394.6,105.3 C399.0,104.5 402.7,102.8 406.2,101.2 C409.7,99.6 412.7,97.7 415.4,95.4 C418.1,93.1 420.8,90.3 422.4,87.4 C424.0,84.5 424.9,80.8 425.2,78.1 C425.5,75.4 425.4,74.3 424.1,71.2 C422.9,68.1 420.7,63.5 417.7,59.6 C414.7,55.8 410.4,51.4 406.2,48.1 C402.0,44.8 397.1,41.9 392.3,40.0 C387.5,38.1 382.7,37.0 377.3,36.5 C371.9,36.0 365.6,36.5 360.0,37.2 C354.4,38.0 349.5,39.4 343.9,41.0 C338.3,42.6 332.4,45.0 326.6,47.0 C320.8,49.0 313.8,51.6 309.3,53.1 C304.8,54.6 301.3,55.7 299.7,56.2" fill="none" stroke="#c414a8" stroke-width="11.5" stroke-linecap="round" stroke-linejoin="round" filter="url(#gl)" opacity="0.9"/><path d="M343.0,23.7 C340.3,25.0 332.2,28.8 326.6,31.5 C321.0,34.2 315.1,37.2 309.3,40.1 C303.5,43.0 297.7,45.6 291.9,48.8 C286.1,52.0 279.5,55.9 274.6,59.2 C269.7,62.5 265.7,65.4 262.5,68.7 C259.3,72.0 257.0,75.6 255.6,79.1 C254.2,82.6 253.6,86.0 253.9,89.5 C254.2,93.0 255.3,96.8 257.3,99.8 C259.3,102.8 262.2,105.6 266.0,107.6 C269.8,109.6 274.6,111.1 279.8,112.0 C285.0,112.9 290.8,113.1 297.1,112.8 C303.5,112.5 310.1,111.2 317.9,110.2 C325.7,109.2 336.9,107.6 343.9,106.8 C350.9,106.0 354.0,105.6 360.0,105.5 C366.0,105.4 374.2,106.0 380.0,106.0 C385.8,106.0 390.2,106.1 394.6,105.3 C399.0,104.5 402.7,102.8 406.2,101.2 C409.7,99.6 412.7,97.7 415.4,95.4 C418.1,93.1 420.8,90.3 422.4,87.4 C424.0,84.5 424.9,80.8 425.2,78.1 C425.5,75.4 425.4,74.3 424.1,71.2 C422.9,68.1 420.7,63.5 417.7,59.6 C414.7,55.8 410.4,51.4 406.2,48.1 C402.0,44.8 397.1,41.9 392.3,40.0 C387.5,38.1 382.7,37.0 377.3,36.5 C371.9,36.0 365.6,36.5 360.0,37.2 C354.4,38.0 349.5,39.4 343.9,41.0 C338.3,42.6 332.4,45.0 326.6,47.0 C320.8,49.0 313.8,51.6 309.3,53.1 C304.8,54.6 301.3,55.7 299.7,56.2" fill="none" stroke="#ff7ae6" stroke-width="6.6" stroke-linecap="round" stroke-linejoin="round" filter="url(#gl2)"/><path d="M343.0,23.7 C340.3,25.0 332.2,28.8 326.6,31.5 C321.0,34.2 315.1,37.2 309.3,40.1 C303.5,43.0 297.7,45.6 291.9,48.8 C286.1,52.0 279.5,55.9 274.6,59.2 C269.7,62.5 265.7,65.4 262.5,68.7 C259.3,72.0 257.0,75.6 255.6,79.1 C254.2,82.6 253.6,86.0 253.9,89.5 C254.2,93.0 255.3,96.8 257.3,99.8 C259.3,102.8 262.2,105.6 266.0,107.6 C269.8,109.6 274.6,111.1 279.8,112.0 C285.0,112.9 290.8,113.1 297.1,112.8 C303.5,112.5 310.1,111.2 317.9,110.2 C325.7,109.2 336.9,107.6 343.9,106.8 C350.9,106.0 354.0,105.6 360.0,105.5 C366.0,105.4 374.2,106.0 380.0,106.0 C385.8,106.0 390.2,106.1 394.6,105.3 C399.0,104.5 402.7,102.8 406.2,101.2 C409.7,99.6 412.7,97.7 415.4,95.4 C418.1,93.1 420.8,90.3 422.4,87.4 C424.0,84.5 424.9,80.8 425.2,78.1 C425.5,75.4 425.4,74.3 424.1,71.2 C422.9,68.1 420.7,63.5 417.7,59.6 C414.7,55.8 410.4,51.4 406.2,48.1 C402.0,44.8 397.1,41.9 392.3,40.0 C387.5,38.1 382.7,37.0 377.3,36.5 C371.9,36.0 365.6,36.5 360.0,37.2 C354.4,38.0 349.5,39.4 343.9,41.0 C338.3,42.6 332.4,45.0 326.6,47.0 C320.8,49.0 313.8,51.6 309.3,53.1 C304.8,54.6 301.3,55.7 299.7,56.2" fill="none" stroke="#ffffff" stroke-width="4.6" stroke-linecap="round" stroke-linejoin="round" filter="url(#gl2)"/></svg>
<div class="abs" id="wm">CSDN @CTW2000</div>
</div></body></html>
